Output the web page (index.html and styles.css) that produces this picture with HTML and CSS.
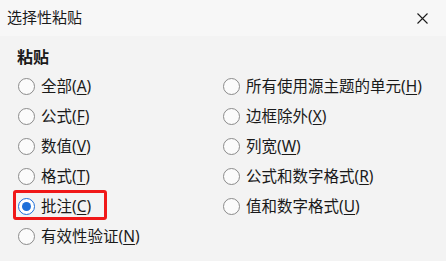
FILE: index.html
```html
<!DOCTYPE html>
<html lang="zh-CN">
<head>
<meta charset="utf-8">
<title>选择性粘贴</title>
<link rel="stylesheet" href="styles.css">
</head>
<body>
<div class="dialog">
  <div class="titlebar">
    <span class="title">选择性粘贴</span>
    <span class="close">
      <svg width="11" height="11" viewBox="0 0 11 11"><path d="M0.5 0.5 L10.5 10.5 M10.5 0.5 L0.5 10.5" stroke="#1b1b1b" stroke-width="1.1" fill="none"/></svg>
    </span>
  </div>
  <div class="content">
    <div class="heading">粘贴</div>
    <div class="grid">
      <label class="opt"><span class="radio"></span><span class="txt">全部(<u>A</u>)</span></label>
      <label class="opt"><span class="radio"></span><span class="txt">所有使用源主题的单元(<u>H</u>)</span></label>
      <label class="opt"><span class="radio"></span><span class="txt">公式(<u>F</u>)</span></label>
      <label class="opt"><span class="radio"></span><span class="txt">边框除外(<u>X</u>)</span></label>
      <label class="opt"><span class="radio"></span><span class="txt">数值(<u>V</u>)</span></label>
      <label class="opt"><span class="radio"></span><span class="txt">列宽(<u>W</u>)</span></label>
      <label class="opt"><span class="radio"></span><span class="txt">格式(<u>T</u>)</span></label>
      <label class="opt"><span class="radio"></span><span class="txt">公式和数字格式(<u>R</u>)</span></label>
      <label class="opt marked"><span class="radio checked"></span><span class="txt">批注(<u>C</u>)</span></label>
      <label class="opt"><span class="radio"></span><span class="txt">值和数字格式(<u>U</u>)</span></label>
      <label class="opt"><span class="radio"></span><span class="txt">有效性验证(<u>N</u>)</span></label>
    </div>
  </div>
</div>
</body>
</html>
```
FILE: styles.css
```css
html, body {
  margin: 0;
  padding: 0;
}
body {
  width: 446px;
  height: 261px;
  background: #f3f3f3;
  font-family: "Noto Sans", "Noto Sans CJK SC", sans-serif;
  color: #1a1a1a;
  overflow: hidden;
}
.dialog {
  width: 446px;
  height: 261px;
  display: flex;
  flex-direction: column;
}
.titlebar {
  height: 36px;
  background: #f7f7f7;
  display: flex;
  align-items: center;
  justify-content: space-between;
  padding: 0 18px 0 7px;
  box-sizing: border-box;
}
.title {
  font-size: 15px;
  line-height: 20px;
  margin-top: -3px;
}
.close {
  display: flex;
  width: 11px;
  height: 11px;
  margin-top: 1px;
}
.content {
  padding: 10px 0 0 17px;
}
.heading {
  font-size: 16px;
  font-weight: bold;
  line-height: 22px;
  height: 22px;
  margin-bottom: 3px;
}
.grid {
  display: grid;
  grid-template-columns: 205px 1fr;
  grid-auto-rows: 30px;
}
.opt {
  display: flex;
  align-items: center;
  position: relative;
  font-size: 15.5px;
}
.radio {
  width: 15px;
  height: 15px;
  border: 1px solid #8b8b8b;
  border-radius: 50%;
  background: #fbfbfb;
  margin-left: 1px;
  margin-right: 6px;
  flex: none;
  position: relative;
}
.radio.checked {
  border-color: #1e6fd9;
  background: #ffffff;
}
.radio.checked::after {
  content: "";
  position: absolute;
  left: 3px;
  top: 3px;
  width: 9px;
  height: 9px;
  border-radius: 50%;
  background: #1e6fd9;
}
.txt {
  line-height: 20px;
  white-space: nowrap;
}
.txt u {
  text-underline-offset: 2px;
}
.marked::after {
  content: "";
  position: absolute;
  left: -4px;
  top: -1px;
  width: 88px;
  height: 24px;
  border: 3px solid #f01818;
  border-radius: 3px;
}
```
